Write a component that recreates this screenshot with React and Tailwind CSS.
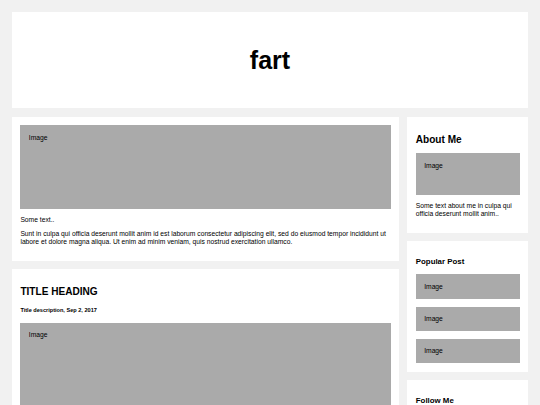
export default function App() {
  const popular = ['Image', 'Image', 'Image'];

  return (
    <div className="min-h-screen bg-[#f1f1f1] p-[12px] font-['Liberation_Sans',Arial,sans-serif] text-[6.72px] leading-[1.15] text-black">
      {/* Header */}
      <div className="bg-white h-[96px] flex items-center justify-center">
        <h1 className="text-[25px] font-bold leading-none">fart</h1>
      </div>

      <div className="flex items-start">
        {/* Left column */}
        <div className="w-3/4">
          <div className="bg-white p-[8.4px] mt-[8.8px]">
            <div className="bg-[#aaa] h-[84px] p-[8.4px]">Image</div>
            <p className="my-[6.72px]">Some text..</p>
            <p className="my-[6.72px]">
              Sunt in culpa qui officia deserunt mollit anim id est laborum consectetur adipiscing elit, sed do eiusmod tempor incididunt ut labore et dolore magna aliqua. Ut enim ad minim veniam, quis nostrud exercitation ullamco.
            </p>
          </div>

          <div className="bg-white p-[8.4px] mt-[8.4px]">
            <h2 className="text-[10.08px] font-bold mt-[8.37px] leading-[1.15]">TITLE HEADING</h2>
            <h5 className="text-[5.58px] font-bold mt-[9.3px] leading-[1.15]">Title description, Sep 2, 2017</h5>
            <div className="bg-[#aaa] h-[84px] p-[8.4px] mt-[9.3px]">Image</div>
            <p className="my-[6.72px]">Some text..</p>
            <p className="my-[6.72px]">
              Sunt in culpa qui officia deserunt mollit anim id est laborum consectetur adipiscing elit, sed do eiusmod tempor incididunt ut labore et dolore magna aliqua. Ut enim ad minim veniam, quis nostrud exercitation ullamco.
            </p>
          </div>
        </div>

        {/* Right column */}
        <div className="w-1/4 pl-[8.4px]">
          <div className="bg-white p-[8.4px] mt-[8.8px]">
            <h2 className="text-[10.08px] font-bold mt-[8.37px] mb-[8.37px] leading-[1.15]">About Me</h2>
            <div className="bg-[#aaa] h-[42px] p-[8.4px]">Image</div>
            <p className="my-[6.72px]">Some text about me in culpa qui officia deserunt mollit anim..</p>
          </div>

          <div className="bg-white p-[8.4px] mt-[8.4px]">
            <h3 className="text-[7.86px] font-bold my-[7.86px] leading-[1.15]">Popular Post</h3>
            <div className="flex flex-col gap-[7.73px]">
              {popular.map((t, i) => (
                <div key={i} className="bg-[#aaa] p-[8.4px]">{t}</div>
              ))}
            </div>
          </div>

          <div className="bg-white p-[8.4px] mt-[8.4px]">
            <h3 className="text-[7.86px] font-bold my-[7.86px] leading-[1.15]">Follow Me</h3>
            <p className="my-[6.72px]">Some text..</p>
          </div>
        </div>
      </div>
    </div>
  );
}
